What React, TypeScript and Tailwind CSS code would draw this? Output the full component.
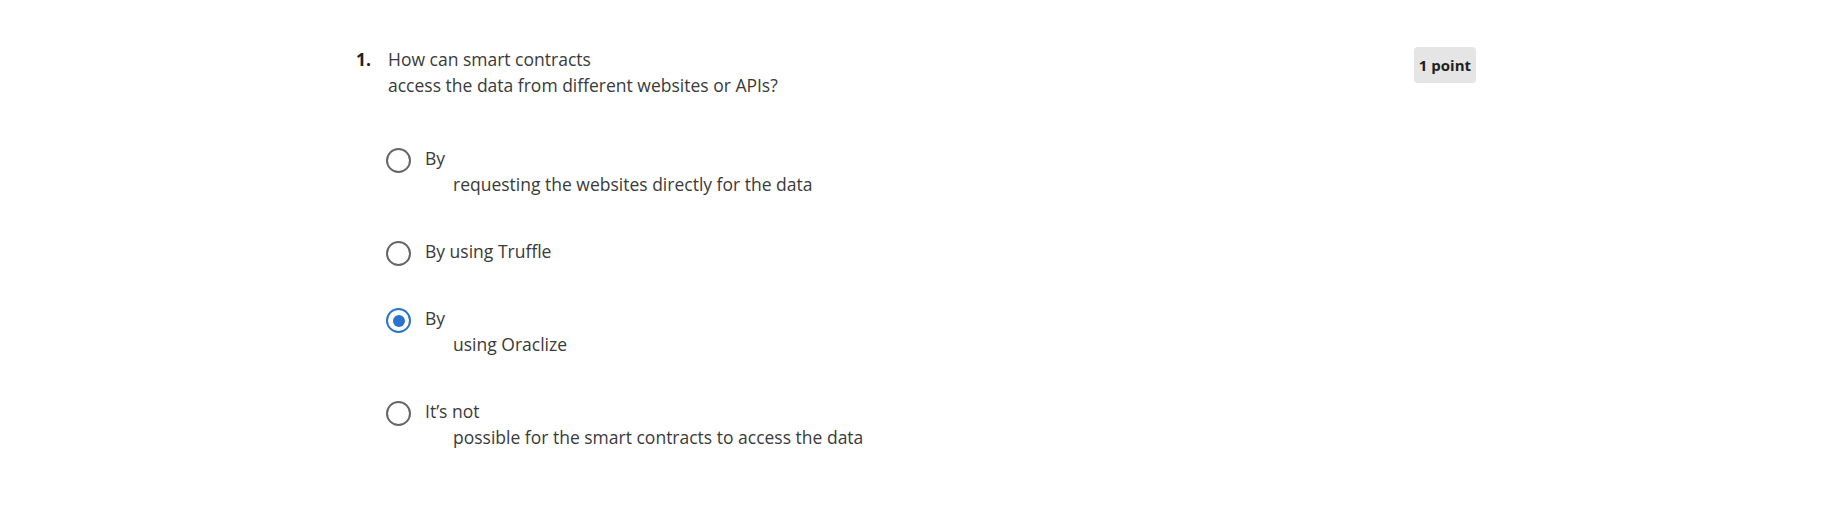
import React from 'react';

interface Option {
  first: string;
  second?: string;
  checked?: boolean;
}

const options: Option[] = [
  { first: 'By', second: 'requesting the websites directly for the data' },
  { first: 'By using Truffle' },
  { first: 'By', second: 'using Oraclize', checked: true },
  { first: 'It\u2019s not', second: 'possible for the smart contracts to access the data' },
];

const Radio = ({ checked }: { checked?: boolean }) => {
  if (checked) {
    return (
      <div className="mt-[3px] -mb-[2px] flex h-[25px] w-[25px] shrink-0 items-center justify-center rounded-full border-[2.5px] border-[#2a73cc]">
        <div className="h-[12px] w-[12px] rounded-full bg-[#2a73cc]" />
      </div>
    );
  }
  return <div className="mt-[3px] -mb-[2px] h-[25px] w-[25px] shrink-0 rounded-full border-[2.5px] border-[#666666]" />;
};

const App = () => {
  return (
    <div className="min-h-[513px] w-full bg-white text-[#3a3a3a]" style={{ fontFamily: '"Open Sans", "Noto Sans", sans-serif' }}>
      <div className="mx-auto w-[1120px] pt-[46px]">
        {/* Question header */}
        <div className="flex items-start justify-between">
          <div className="flex text-[17.5px] leading-[26px]">
            <span className="w-[32px] shrink-0 font-bold text-[#1f1f1f]">1.</span>
            <div>
              <div>How can smart contracts</div>
              <div>access the data from different websites or APIs?</div>
            </div>
          </div>
          <div className="mt-[1px] rounded-[4px] bg-[#e5e5e5] px-[5px] py-[8px] text-[15px] leading-[20px] font-bold text-[#1f1f1f]">
            1 point
          </div>
        </div>

        {/* Options */}
        <div className="mt-[47px] ml-[30px] flex flex-col gap-[41px]">
          {options.map((opt, i) => (
            <div key={i} className="flex items-start gap-[14px]">
              <Radio checked={opt.checked} />
              <div className="text-[17.5px] leading-[26px]">
                <div>{opt.first}</div>
                {opt.second && <div className="pl-[28px]">{opt.second}</div>}
              </div>
            </div>
          ))}
        </div>
      </div>
    </div>
  );
};

export default App;
